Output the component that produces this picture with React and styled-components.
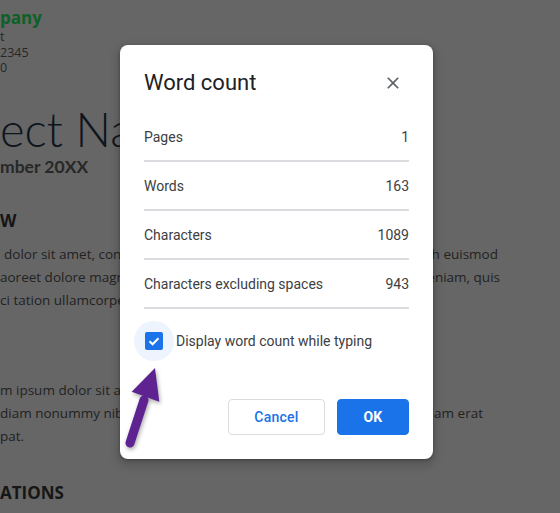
import React from "react";
import styled, { createGlobalStyle } from "styled-components";

const Global = createGlobalStyle`
  html, body { margin: 0; padding: 0; }
  body { width: 560px; height: 513px; overflow: hidden; background: #666666; }
  #root { position: relative; width: 560px; height: 513px; }
`;

const Doc = styled.div`
  display: flex;
  flex-direction: column;
  padding-top: 7px;
  height: 513px;
  box-sizing: border-box;
  background: #666666;
  font-family: "Open Sans", "DejaVu Sans", sans-serif;
  color: #1e1e1e;
  overflow: hidden;
  white-space: nowrap;
`;

const Company = styled.div`
  font-size: 17px;
  font-weight: 700;
  line-height: 22px;
  color: #0d6126;
`;

const Address = styled.div`
  font-size: 12.5px;
  line-height: 15.5px;
  color: #262626;
`;

const DocTitle = styled.div`
  margin-top: 30px;
  font-family: Lato, "Open Sans", sans-serif;
  font-size: 47px;
  font-weight: 300;
  line-height: 46px;
  color: #0e151d;
`;

const DocDate = styled.div`
  margin-top: 4px;
  font-family: Lato, "Open Sans", sans-serif;
  font-size: 17.5px;
  font-weight: 700;
  line-height: 22px;
  color: #282828;
`;

const Heading = styled.div`
  margin-top: ${(p) => p.$top}px;
  font-size: 17px;
  font-weight: 700;
  line-height: 22px;
  color: #161616;
`;

const Para = styled.div`
  margin-top: ${(p) => p.$top}px;
  display: flex;
  flex-direction: column;
  font-size: 13.5px;
  line-height: 23px;
  color: #222;
`;

const Line = styled.div`
  display: flex;
  justify-content: space-between;
  width: ${(p) => p.$end}px;
`;

const Frag = styled.span`
  margin-left: ${(p) => p.$indent || 0}px;
`;

const Dialog = styled.div`
  position: absolute;
  left: 120px;
  top: 45px;
  width: 313px;
  height: 414px;
  box-sizing: border-box;
  padding: 24px;
  background: #fff;
  border-radius: 8px;
  box-shadow: 0 4px 8px 3px rgba(0, 0, 0, 0.15), 0 1px 3px rgba(0, 0, 0, 0.3);
  display: flex;
  flex-direction: column;
  font-family: Roboto, "Liberation Sans", sans-serif;
`;

const Header = styled.div`
  display: flex;
  align-items: center;
  justify-content: space-between;
  height: 28px;
  margin-bottom: 16px;
`;

const Title = styled.h2`
  margin: 0;
  font-size: 22px;
  font-weight: 400;
  line-height: 28px;
  color: #202124;
`;

const CloseButton = styled.button`
  width: 32px;
  height: 32px;
  padding: 0;
  border: none;
  background: transparent;
  display: flex;
  align-items: center;
  justify-content: center;
  cursor: pointer;
`;

const Stat = styled.div`
  display: flex;
  align-items: center;
  justify-content: space-between;
  height: 47px;
  border-bottom: 2px solid #dadce0;
  font-size: 14px;
  color: #3c4043;
`;

const CheckRow = styled.label`
  display: flex;
  align-items: center;
  margin-top: 12px;
  margin-left: -10px;
  font-size: 14px;
  color: #3c4043;
  gap: 2px;
`;

const CheckHalo = styled.span`
  width: 40px;
  height: 40px;
  border-radius: 50%;
  background: rgba(26, 115, 232, 0.08);
  display: flex;
  align-items: center;
  justify-content: center;
`;

const Box = styled.span`
  width: 18px;
  height: 18px;
  border-radius: 2px;
  background: #1a73e8;
  display: flex;
  align-items: center;
  justify-content: center;
`;

const Actions = styled.div`
  margin-top: auto;
  display: flex;
  justify-content: flex-end;
  gap: 12px;
`;

const Button = styled.button`
  height: 36px;
  width: ${(p) => p.$w}px;
  box-sizing: border-box;
  border-radius: 4px;
  font-family: Roboto, "Liberation Sans", sans-serif;
  font-size: 14px;
  font-weight: ${(p) => (p.$primary ? 700 : 500)};
  letter-spacing: 0.25px;
  cursor: pointer;
  border: 1px solid ${(p) => (p.$primary ? "#1a73e8" : "#dadce0")};
  background: ${(p) => (p.$primary ? "#1a73e8" : "#fff")};
  color: ${(p) => (p.$primary ? "#fff" : "#1a73e8")};
`;

const ArrowSvg = styled.svg`
  position: absolute;
  left: 0;
  top: 315px;
  filter: drop-shadow(1px 2px 2px rgba(0, 0, 0, 0.35));
`;

const stats = [
  ["Pages", "1"],
  ["Words", "163"],
  ["Characters", "1089"],
  ["Characters excluding spaces", "943"],
];

export default function App() {
  return (
    <>
      <Global />
      <Doc>
        <Company>pany</Company>
        <Address>t</Address>
        <Address>2345</Address>
        <Address>0</Address>
        <DocTitle>ect Na</DocTitle>
        <DocDate>mber 20XX</DocDate>
        <Heading $top={32}>W</Heading>
        <Para $top={11}>
          <Line $end={498}>
            <Frag $indent={4}>dolor sit amet, cons</Frag>
            <Frag>nibh euismod</Frag>
          </Line>
          <Line $end={500}>
            <Frag>aoreet dolore magna</Frag>
            <Frag>veniam, quis</Frag>
          </Line>
          <Line $end={500}>
            <Frag>ci tation ullamcorper</Frag>
            <Frag></Frag>
          </Line>
        </Para>
        <Para $top={67}>
          <Line $end={500}>
            <Frag>m ipsum dolor sit am</Frag>
            <Frag></Frag>
          </Line>
          <Line $end={483}>
            <Frag>diam nonummy nibh</Frag>
            <Frag>quam erat</Frag>
          </Line>
          <Line $end={500}>
            <Frag>pat.</Frag>
            <Frag></Frag>
          </Line>
        </Para>
        <Heading $top={34}>ATIONS</Heading>
      </Doc>

      <Dialog role="dialog" aria-label="Word count">
        <Header>
          <Title>Word count</Title>
          <CloseButton aria-label="Close">
            <svg width="20" height="20" viewBox="0 0 24 24">
              <path
                fill="#5f6368"
                d="M19 6.41L17.59 5 12 10.59 6.41 5 5 6.41 10.59 12 5 17.59 6.41 19 12 13.41 17.59 19 19 17.59 13.41 12z"
              />
            </svg>
          </CloseButton>
        </Header>
        {stats.map(([label, value]) => (
          <Stat key={label}>
            <span>{label}</span>
            <span>{value}</span>
          </Stat>
        ))}
        <CheckRow>
          <CheckHalo>
            <Box>
              <svg width="18" height="18" viewBox="0 0 18 18">
                <polyline
                  points="4.5,9.3 7.6,12.3 13.5,6.2"
                  fill="none"
                  stroke="#fff"
                  strokeWidth="2"
                />
              </svg>
            </Box>
          </CheckHalo>
          Display word count while typing
        </CheckRow>
        <Actions>
          <Button $w={97}>Cancel</Button>
          <Button $w={72} $primary>
            OK
          </Button>
        </Actions>
        <ArrowSvg width="50" height="95" viewBox="0 0 50 95">
          <line
            x1="10"
            y1="83"
            x2="24"
            y2="40"
            stroke="#5e2391"
            strokeWidth="9"
            strokeLinecap="round"
          />
          <polygon points="35,8 11.7,31.7 39.3,41.7" fill="#5e2391" />
        </ArrowSvg>
      </Dialog>
    </>
  );
}
